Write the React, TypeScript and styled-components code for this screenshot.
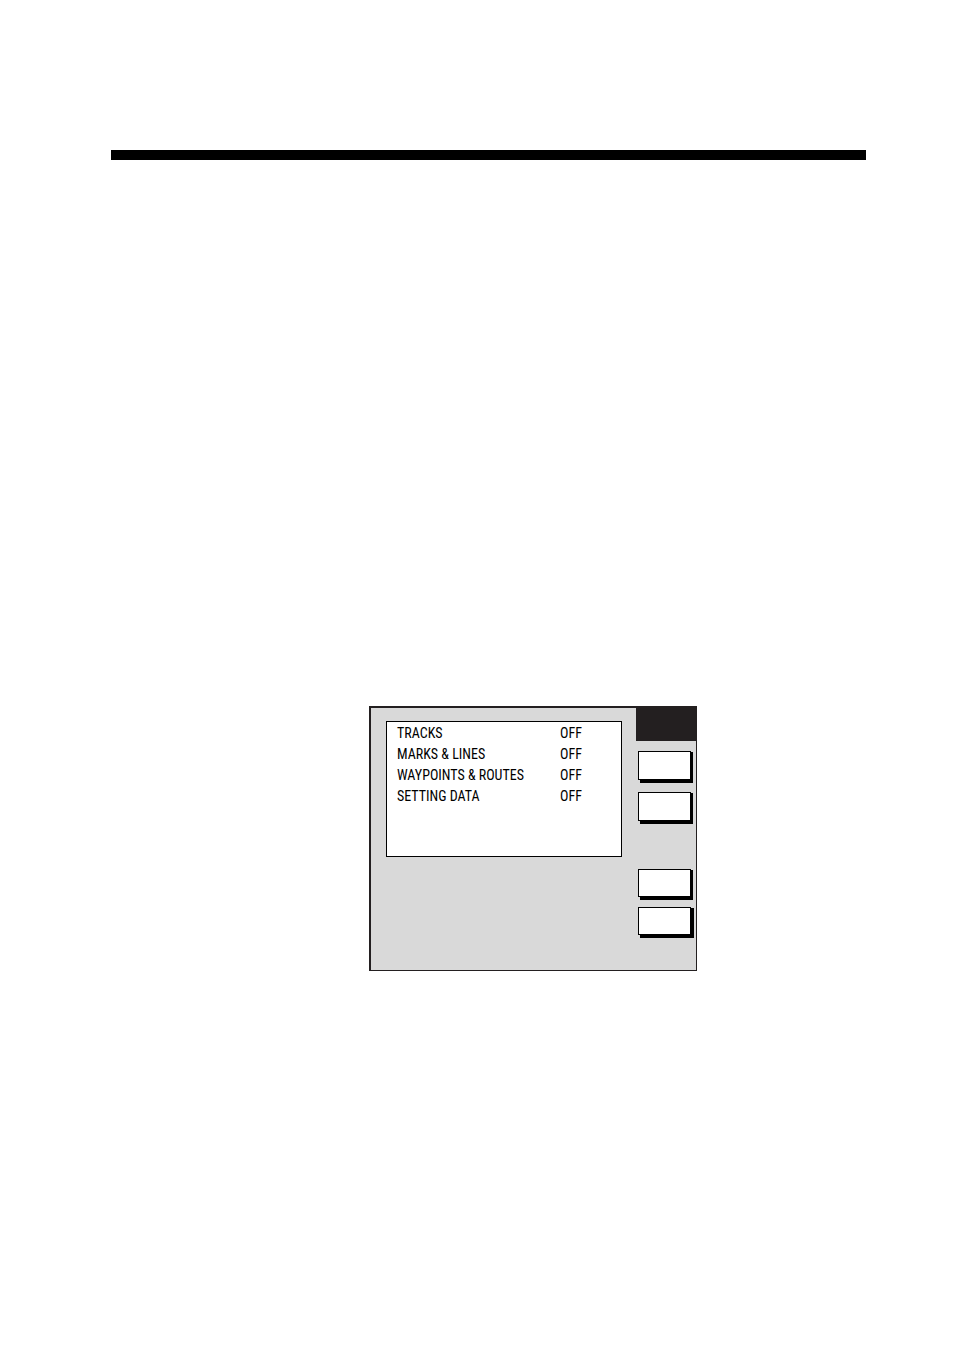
import React from "react";
import styled, { createGlobalStyle } from "styled-components";

const GlobalStyle = createGlobalStyle`
  *, *::before, *::after { box-sizing: border-box; }
  body {
    margin: 0;
    background: #ffffff;
    color: #000000;
    font-family: "Roboto Condensed", Roboto, "Liberation Sans", sans-serif;
  }
`;

const Page = styled.main`
  min-height: 100vh;
  padding: 150px 88px 48px 111px;
`;

const Rule = styled.hr`
  height: 10px;
  margin: 0 0 546px;
  border: 0;
  background: #000000;
`;

const Screen = styled.section`
  display: grid;
  grid-template-columns: 1fr 60px;
  width: 328px;
  margin-left: 258px;
  border: solid #231f20;
  border-width: 2px 1px 1px 2px;
  background: #d9d9d9;
`;

const Content = styled.div`
  padding: 13px 14px 0 15px;
`;

const ListBox = styled.div`
  min-height: 136px;
  padding: 1px 0 0 10px;
  border: 1px solid #000000;
  background: #ffffff;
`;

const Settings = styled.table`
  width: 100%;
  border-collapse: collapse;
  font-size: 14px;
  line-height: 21px;
`;

const Name = styled.th`
  padding: 0;
  font-weight: 400;
  text-align: left;
  white-space: nowrap;
`;

const Value = styled.td`
  width: 61px;
  padding: 0;
`;

const SoftKeys = styled.nav`
  display: flex;
  flex-direction: column;
  padding-bottom: 35px;
`;

const Title = styled.div`
  height: 33px;
  background: #231f20;
`;

const KeyGroup = styled.div<{ $top: number; $gap: number }>`
  display: flex;
  flex-direction: column;
  gap: ${(p) => p.$gap}px;
  padding: ${(p) => p.$top}px 5px 0 2px;
`;

const Key = styled.button<{ $height: number; $depth: number }>`
  height: ${(p) => p.$height}px;
  padding: 0;
  border: 1px solid #000000;
  border-radius: 0;
  background: #ffffff;
  box-shadow: 2px 2px 0 #000000, 2px 3px 0 #000000,
    ${(p) => p.$depth}px 1px 0 #000000, ${(p) => p.$depth}px 3px 0 #000000;
`;

const settings = [
  { name: "TRACKS", value: "OFF" },
  { name: "MARKS & LINES", value: "OFF" },
  { name: "WAYPOINTS & ROUTES", value: "OFF" },
  { name: "SETTING DATA", value: "OFF" },
];

export default function App() {
  return (
    <>
      <GlobalStyle />
      <Page>
        <Rule />
        <Screen>
          <Content>
            <ListBox>
              <Settings>
                <tbody>
                  {settings.map((s) => (
                    <tr key={s.name}>
                      <Name scope="row">{s.name}</Name>
                      <Value>{s.value}</Value>
                    </tr>
                  ))}
                </tbody>
              </Settings>
            </ListBox>
          </Content>
          <SoftKeys>
            <Title />
            <KeyGroup $top={10} $gap={12}>
              <Key type="button" aria-label="Soft key 1" $height={29} $depth={2} />
              <Key type="button" aria-label="Soft key 2" $height={29} $depth={2} />
            </KeyGroup>
            <KeyGroup $top={48} $gap={10}>
              <Key type="button" aria-label="Soft key 3" $height={28} $depth={2} />
              <Key type="button" aria-label="Soft key 4" $height={28} $depth={3} />
            </KeyGroup>
          </SoftKeys>
        </Screen>
      </Page>
    </>
  );
}
